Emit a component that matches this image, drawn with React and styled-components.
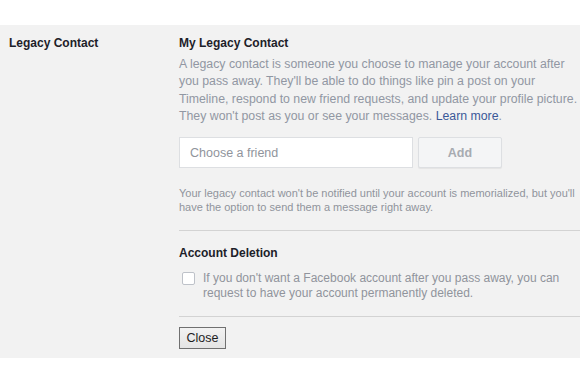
import React, { useState } from "react";
import styled, { createGlobalStyle } from "styled-components";

const GlobalStyle = createGlobalStyle`
  html, body {
    margin: 0;
    padding: 0;
    background: #fff;
  }
  body {
    font-family: "Liberation Sans", Arial, sans-serif;
    -webkit-font-smoothing: antialiased;
  }
`;

function App() {
  const [friend, setFriend] = useState("");
  const [deleteAccount, setDeleteAccount] = useState(false);

  return (
    <Page>
      <GlobalStyle />
      <Panel>
        <SideLabel>Legacy Contact</SideLabel>
        <Content>
          <Heading>My Legacy Contact</Heading>
          <Description>
            A legacy contact is someone you choose to manage your account after
            <br />
            you pass away. They'll be able to do things like pin a post on your
            <br />
            Timeline, respond to new friend requests, and update your profile
            picture.
            <br />
            They won't post as you or see your messages.{" "}
            <LearnMore href="#">Learn more</LearnMore>.
          </Description>

          <FriendRow>
            <FriendInput
              type="text"
              value={friend}
              placeholder="Choose a friend"
              onChange={(e) => setFriend(e.target.value)}
            />
            <AddButton type="button" disabled={friend === ""}>
              Add
            </AddButton>
          </FriendRow>

          <Note>
            Your legacy contact won't be notified until your account is
            memorialized, but you'll have the option to send them a message
            right away.
          </Note>

          <Divider $top={16} $bottom={15} />

          <Heading>Account Deletion</Heading>
          <CheckRow>
            <Checkbox
              type="checkbox"
              checked={deleteAccount}
              onChange={(e) => setDeleteAccount(e.target.checked)}
            />
            <CheckText>
              If you don't want a Facebook account after you pass away, you can
              request to have your account permanently deleted.
            </CheckText>
          </CheckRow>

          <Divider $top={16} $bottom={10} />

          <CloseButton type="button">Close</CloseButton>
        </Content>
      </Panel>
    </Page>
  );
}

const Page = styled.div`
  width: 580px;
  height: 386px;
  padding-top: 25px;
  box-sizing: border-box;
  background: #fff;
`;

const Panel = styled.div`
  display: flex;
  background: #f2f2f2;
  padding: 11px 0 9px 9px;
  height: 333px;
  box-sizing: border-box;
`;

const SideLabel = styled.div`
  width: 170px;
  font-size: 12px;
  font-weight: bold;
  color: #1d2129;
  line-height: 14px;
`;

const Content = styled.div`
  flex: 1;
  display: flex;
  flex-direction: column;
`;

const Heading = styled.div`
  font-size: 12px;
  font-weight: bold;
  color: #1d2129;
  line-height: 14px;
  margin-bottom: 6px;
`;

const Description = styled.p`
  margin: 0;
  width: 400px;
  white-space: nowrap;
  font-size: 12.3px;
  line-height: 17.3px;
  color: #9197a3;
`;

const LearnMore = styled.a`
  color: #3b5998;
  text-decoration: none;
`;

const FriendRow = styled.div`
  display: flex;
  gap: 5px;
  margin-top: 12px;
`;

const FriendInput = styled.input`
  width: 234px;
  height: 31px;
  box-sizing: border-box;
  padding: 0 10px;
  border: 1px solid #dddfe2;
  background: #fff;
  font-family: inherit;
  font-size: 12.5px;
  color: #1d2129;
  outline: none;

  &::placeholder {
    color: #90949c;
  }
`;

const AddButton = styled.button`
  width: 84px;
  height: 31px;
  box-sizing: border-box;
  border: 1px solid #dddfe2;
  border-radius: 2px;
  background: #f4f5f6;
  font-family: inherit;
  font-size: 12.5px;
  font-weight: bold;
  color: #a7abb1;
  box-shadow: 0 1px 1px rgba(0, 0, 0, 0.06);
`;

const Note = styled.p`
  margin: 18px 0 0;
  width: 400px;
  font-size: 11px;
  line-height: 14px;
  color: #90949c;
`;

const Divider = styled.div`
  height: 1px;
  background: #d3d3d3;
  margin: ${(p) => `${p.$top}px 0 ${p.$bottom}px`};
`;

const CheckRow = styled.div`
  display: flex;
  align-items: flex-start;
  gap: 8px;
  margin-top: 5px;
`;

const Checkbox = styled.input`
  appearance: none;
  width: 13px;
  height: 13px;
  margin: 1px 0 0 3px;
  border: 1px solid #bec2c9;
  border-radius: 2px;
  background: #fff;
  flex-shrink: 0;
`;

const CheckText = styled.div`
  width: 372px;
  font-size: 12px;
  line-height: 14.5px;
  color: #90949c;
`;

const CloseButton = styled.button`
  align-self: flex-start;
  width: 47px;
  height: 22px;
  padding: 0;
  border: 1px solid #707070;
  border-radius: 0;
  background: linear-gradient(#f2f2f2, #e4e4e4);
  font-family: inherit;
  font-size: 12.5px;
  color: #1d1d1d;
`;

export default App;
